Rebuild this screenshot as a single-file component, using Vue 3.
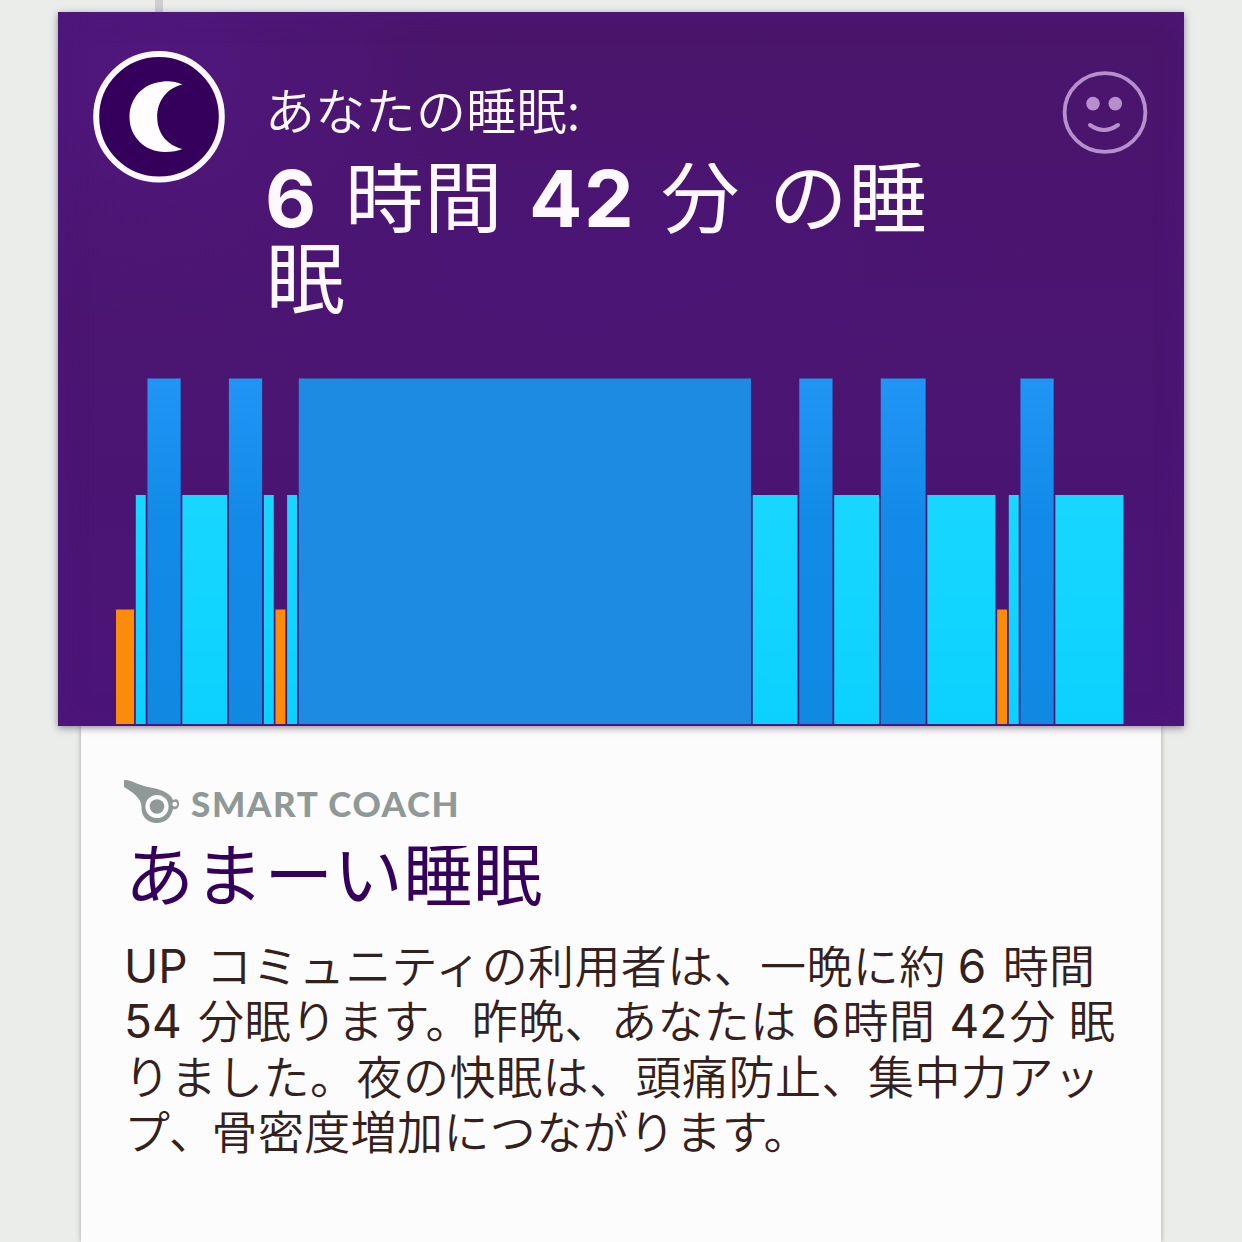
<script setup>
const UNIT = 11.64
const GAP = 1.7
const BOTTOM = 346
const heights = { deep: 345.5, light: 229, awake: 114.5 }

const phases = [
  ['awake', 1.7], ['light', 1], ['deep', 3], ['light', 4], ['deep', 3],
  ['light', 1], ['awake', 1], ['light', 1], ['core', 39], ['light', 4],
  ['deep', 3], ['light', 4], ['deep', 4], ['light', 6], ['awake', 1],
  ['light', 1], ['deep', 3], ['light', 6],
]

let cursor = 0
const bars = phases.map(([kind, units]) => {
  const height = heights[kind] ?? heights.deep
  const bar = { kind, x: cursor, y: BOTTOM - height, width: units * UNIT - GAP, height }
  cursor += units * UNIT
  return bar
})
</script>

<template>
  <main class="page">
    <div class="timeline"></div>
    <section class="sleep-card">
      <header class="head">
        <div class="badge">
          <svg width="132" height="132" viewBox="0 0 132 132">
            <circle cx="66" cy="65.8" r="62.8" fill="#35005b" stroke="#fef8ff" stroke-width="6" />
            <path d="M89.5 33.5C82 30 74 30 69 30.8C50 32.5 36.5 47 36.5 66C36.5 86 52 101 72 101C79 101 85 100 89.5 98C73 94 64.2 81 64.2 66C64.2 50 74 37 89.5 33.5Z" fill="#fffdff" />
          </svg>
        </div>
        <div class="summary">
          <p class="label">あなたの睡眠:</p>
          <h1 class="duration">
            <span class="row"><b class="six">6</b><span class="hours">時間</span><b class="mins">42</b><span class="fun">分</span><span class="rest">の睡</span></span>
            <span class="row">眠</span>
          </h1>
        </div>
        <svg class="mood" width="86" height="84" viewBox="0 0 86 84">
          <ellipse cx="43" cy="41.5" rx="40.4" ry="39.4" fill="none" stroke="#b78fce" stroke-width="3.8" />
          <circle cx="31" cy="32.6" r="6.8" fill="#b78fce" />
          <circle cx="53.3" cy="32.6" r="6.8" fill="#b78fce" />
          <path d="M28 54Q42 64 56 54" fill="none" stroke="#b78fce" stroke-width="4" stroke-linecap="round" />
        </svg>
      </header>
      <svg class="chart" width="1010" height="348" viewBox="0 0 1010 348">
        <defs>
          <linearGradient id="deep" x1="0" y1="0" x2="0" y2="1">
            <stop offset="0" stop-color="#2095f5" />
            <stop offset=".4" stop-color="#128be8" />
            <stop offset="1" stop-color="#1089e3" />
          </linearGradient>
          <linearGradient id="light" x1="0" y1="0" x2="0" y2="1">
            <stop offset="0" stop-color="#18d7ff" />
            <stop offset="1" stop-color="#0bd1ff" />
          </linearGradient>
        </defs>
        <rect
          v-for="(bar, i) in bars"
          :key="i"
          :class="bar.kind"
          :x="bar.x"
          :y="bar.y"
          :width="bar.width"
          :height="bar.height"
        />
      </svg>
    </section>

    <section class="coach-card">
      <div class="coach">
        <svg width="56" height="44" viewBox="0 0 56 44">
          <path d="M0 0C6 0 9 2 14 4C24 8 35 8 41 12C45 14 48 17 49 20C53 18 55 20 55 24C55 28 52 30 49 29C47 38 41 43 33 43C23 43 17 36 17.5 27C17.5 19 10 13 0 7Z" fill="#8f9997" />
          <circle cx="33" cy="26.5" r="11.6" fill="#fdfcfc" />
          <circle cx="33" cy="26.5" r="7.3" fill="#8f9997" />
          <circle cx="50.8" cy="24.2" r="2.4" fill="#fdfcfc" />
        </svg>
        <span class="coach-name">SMART COACH</span>
      </div>
      <h2 class="title">あまーい睡眠</h2>
      <p class="body">
        <span class="row"><i class="up">UP</i>コミュニティの利用者は、一晩に約<i class="n6">6</i>時間</span>
        <span class="row"><i class="n54">54</i>分眠ります。昨晩、あなたは<i class="n6b">6</i>時間<i class="n42">42</i>分<i class="sp"></i>眠</span>
        <span class="row wide">りました。夜の快眠は、頭痛防止、集中力アッ</span>
        <span class="row"><span class="tight">プ、</span>骨密度増加につながります。</span>
      </p>
    </section>
  </main>
</template>

<style>
body {
  margin: 0;
  background: #eaedea;
}
</style>

<style scoped>
.page {
  width: 1242px;
  height: 1242px;
  overflow: hidden;
  display: flex;
  flex-direction: column;
  align-items: center;
  background: #eaedea;
  font-family: "Noto Sans CJK JP", sans-serif;
  font-weight: 400;
}
.timeline {
  align-self: flex-start;
  margin-left: 155px;
  width: 8px;
  height: 12px;
  flex: none;
  background: #cfced3;
}
.sleep-card {
  position: relative;
  z-index: 1;
  flex: none;
  display: flex;
  flex-direction: column;
  justify-content: space-between;
  width: 1126px;
  height: 714px;
  box-sizing: border-box;
  background:
    radial-gradient(ellipse 300px 260px at 90px 60px, #50177d, transparent),
    radial-gradient(ellipse 460px 170px at 520px 250px, #4b1576, transparent),
    linear-gradient(#4a156b, #4b1478);
  box-shadow: 0 2px 7px rgba(50, 30, 60, .5), inset 0 0 26px #52188299;
}
.head {
  display: flex;
  align-items: flex-start;
  padding: 39px 36px 0 35px;
}
.badge {
  width: 132px;
  height: 132px;
}
.badge svg,
.mood,
.chart {
  display: block;
}
.summary {
  flex: 1;
  margin-left: 40px;
  color: #fef8ff;
}
.label {
  margin: 24px 0 0;
  font-size: 50px;
  font-weight: 350;
  line-height: 66px;
  letter-spacing: .3px;
  white-space: nowrap;
}
.duration {
  margin: 12px 0 0 1px;
  font-size: 78.5px;
  line-height: 81px;
  font-weight: 400;
  letter-spacing: .5px;
  clip-path: inset(10px 0 0 0);
}
.row {
  display: block;
  white-space: nowrap;
}
b {
  display: inline-block;
  font-family: Inter, sans-serif;
  font-weight: 700;
  font-size: 79px;
  line-height: 70px;
  letter-spacing: 1.5px;
  text-indent: -1px;
}
.six { width: 79px; }
.hours { margin-right: 27px; }
.mins { width: 131px; }
.fun { margin-right: 29px; }
.rest { letter-spacing: 1px; }
.mood {
  margin-top: 20px;
}
.chart {
  margin-left: 58px;
}
.deep { fill: url(#deep); }
.light { fill: url(#light); }
.core {
  fill: #1d8be1;
}
.awake { fill: #fb8c0a; }

.coach-card {
  flex: 1;
  width: 1080px;
  box-sizing: border-box;
  padding: 54px 0 0 43px;
  background: #fdfcfc;
  box-shadow: 0 0 5px rgba(90, 70, 80, .45);
}
.coach {
  display: flex;
  height: 44px;
  align-items: flex-start;
}
.coach-name {
  margin: 0 0 0 11px;
  font-family: Lato, sans-serif;
  font-weight: 900;
  font-size: 35px;
  line-height: 46px;
  letter-spacing: 1.6px;
  color: #8f9997;
}
.title {
  margin: 2px 0 0 1px;
  font-size: 69px;
  line-height: 90px;
  letter-spacing: .6px;
  font-weight: 400;
  color: #35005b;
  clip-path: inset(20px 0 0 0);
}
.body {
  margin: 20px 0 0;
  font-size: 46px;
  line-height: 55.3px;
  letter-spacing: .4px;
  font-weight: 350;
  color: #33211d;
  clip-path: inset(10px 0 0 0);
}
.body .wide { letter-spacing: .5px; }
.body i {
  display: inline-block;
  font-family: Inter, sans-serif;
  font-style: normal;
  font-weight: 400;
  font-size: 46px;
  line-height: 50px;
  letter-spacing: 0;
  box-sizing: border-box;
}
.body .up { width: 82px; }
.body .n54 { width: 74px; }
.body .n6 { width: 57px; padding-left: 12px; }
.body .n6b { width: 46px; padding-left: 15px; }
.body .n42 { width: 74px; padding-left: 14px; }
.body .sp { width: 13px; }
.tight { margin-right: -4px; }
</style>
